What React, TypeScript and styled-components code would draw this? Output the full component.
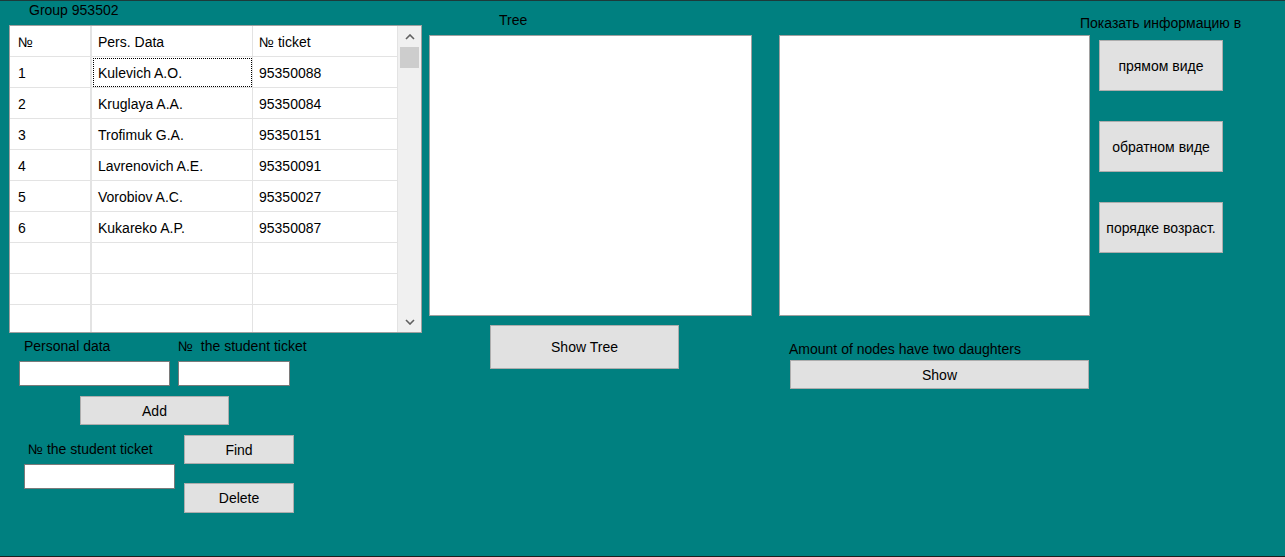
import React from "react";
import styled, { createGlobalStyle } from "styled-components";

const Global = createGlobalStyle`
  html, body { margin: 0; padding: 0; background: #008080; }
  body { font-family: "Liberation Sans", Arial, sans-serif; font-size: 14px; color: #000; }
  * { box-sizing: border-box; }
`;

const Form = styled.div`
  width: 1285px;
  height: 557px;
  background: #008080;
  border-top: 1px solid #1d3a3a;
  border-bottom: 1px solid #1e1e1e;
  display: flex;
  align-items: flex-start;
  padding-left: 9px;
  overflow: hidden;
`;

const Column = styled.div<{ $ml?: number; $w?: number }>`
  display: flex;
  flex-direction: column;
  align-items: flex-start;
  margin-left: ${(p) => p.$ml ?? 0}px;
  ${(p) => (p.$w ? `width: ${p.$w}px;` : "")}
  flex-shrink: 0;
`;

const Caption = styled.div<{ $ml?: number; $mt?: number }>`
  margin-left: ${(p) => p.$ml ?? 0}px;
  margin-top: ${(p) => p.$mt ?? 0}px;
  line-height: 16px;
  height: 16px;
  white-space: pre;
`;

const Grid = styled.div`
  margin-top: 7px;
  width: 413px;
  height: 308px;
  border: 1px solid #a0a0a0;
  background: #fff;
  display: flex;
  overflow: hidden;
`;

const GridBody = styled.div`
  width: 388px;
  display: flex;
  flex-direction: column;
`;

const GridRow = styled.div`
  display: grid;
  grid-template-columns: 82px 161px 145px;
  height: 31px;
  flex-shrink: 0;
`;

const Cell = styled.div<{ $focus?: boolean }>`
  border-right: 1px solid #e3e3e3;
  border-bottom: 1px solid #e3e3e3;
  padding: 2px 0 0 6px;
  display: flex;
  align-items: center;
  white-space: nowrap;
  &:first-child { padding-left: 8px; border-right-width: 2px; }
  ${(p) => (p.$focus ? "outline: 1px dotted #000; outline-offset: -2px;" : "")}
`;

const ScrollBar = styled.div`
  width: 23px;
  background: #f0f0f0;
  display: flex;
  flex-direction: column;
  align-items: center;
`;

const ArrowBox = styled.div`
  width: 23px;
  height: 21px;
  display: flex;
  align-items: center;
  justify-content: center;
`;

const Thumb = styled.div`
  width: 19px;
  height: 21px;
  background: #cdcdcd;
`;

const Spacer = styled.div`
  flex: 1;
`;

const Row = styled.div<{ $ml?: number; $mt?: number; $gap?: number }>`
  display: flex;
  align-items: flex-start;
  margin-left: ${(p) => p.$ml ?? 0}px;
  margin-top: ${(p) => p.$mt ?? 0}px;
  gap: ${(p) => p.$gap ?? 0}px;
`;

const Field = styled.div<{ $w: number }>`
  width: ${(p) => p.$w}px;
  display: flex;
  flex-direction: column;
`;

const Input = styled.input<{ $mt?: number }>`
  margin-top: ${(p) => p.$mt ?? 7}px;
  width: 100%;
  height: 25px;
  border: 1px solid #7a7a7a;
  background: #fff;
  padding: 2px 4px;
  font: inherit;
  outline: none;
`;

const Button = styled.button<{ $w: number; $h: number; $ml?: number; $mt?: number }>`
  width: ${(p) => p.$w}px;
  height: ${(p) => p.$h}px;
  margin-left: ${(p) => p.$ml ?? 0}px;
  margin-top: ${(p) => p.$mt ?? 0}px;
  background: #e1e1e1;
  border: 1px solid #adadad;
  font-family: "Liberation Sans", Arial, sans-serif;
  font-size: 14px;
  color: #000;
  padding: 0;
  flex-shrink: 0;
  white-space: nowrap;
`;

const Panel = styled.div<{ $w: number; $mt?: number }>`
  width: ${(p) => p.$w}px;
  height: 281px;
  margin-top: ${(p) => p.$mt ?? 0}px;
  background: #fff;
  border: 1px solid #a0a0a0;
`;

const ButtonStack = styled.div`
  display: flex;
  flex-direction: column;
  gap: 30px;
  margin-top: 9px;
`;

const Chevron = ({ down }: { down?: boolean }) => (
  <svg width="10" height="6" viewBox="0 0 10 6">
    <polyline
      points={down ? "1,1 5,5 9,1" : "1,5 5,1 9,5"}
      fill="none"
      stroke="#606060"
      strokeWidth="1.6"
    />
  </svg>
);

const students = [
  ["1", "Kulevich A.O.", "95350088"],
  ["2", "Kruglaya A.A.", "95350084"],
  ["3", "Trofimuk G.A.", "95350151"],
  ["4", "Lavrenovich A.E.", "95350091"],
  ["5", "Vorobiov A.C.", "95350027"],
  ["6", "Kukareko A.P.", "95350087"],
  ["", "", ""],
  ["", "", ""],
  ["", "", ""],
];

export default function App() {
  return (
    <>
      <Global />
      <Form>
        <Column $w={413}>
          <Caption $ml={20} $mt={1}>Group 953502</Caption>
          <Grid>
            <GridBody>
              <GridRow>
                <Cell>№</Cell>
                <Cell>Pers. Data</Cell>
                <Cell>№ ticket</Cell>
              </GridRow>
              {students.map((s, i) => (
                <GridRow key={i}>
                  <Cell>{s[0]}</Cell>
                  <Cell $focus={i === 0}>{s[1]}</Cell>
                  <Cell>{s[2]}</Cell>
                </GridRow>
              ))}
            </GridBody>
            <ScrollBar>
              <ArrowBox>
                <Chevron />
              </ArrowBox>
              <Thumb />
              <Spacer />
              <ArrowBox>
                <Chevron down />
              </ArrowBox>
            </ScrollBar>
          </Grid>
          <Row $ml={10} $mt={5} $gap={8}>
            <Field $w={151}>
              <Caption $ml={5}>Personal data</Caption>
              <Input />
            </Field>
            <Field $w={112}>
              <Caption>{"№  the student ticket"}</Caption>
              <Input />
            </Field>
          </Row>
          <Button $w={149} $h={29} $ml={71} $mt={10}>Add</Button>
          <Row $ml={15} $mt={10} $gap={9}>
            <Field $w={151}>
              <Caption $ml={4} $mt={6}>№ the student ticket</Caption>
              <Input />
            </Field>
            <Field $w={110}>
              <Button $w={110} $h={29}>Find</Button>
              <Button $w={110} $h={30} $mt={19}>Delete</Button>
            </Field>
          </Row>
        </Column>

        <Column $ml={7}>
          <Caption $ml={70} $mt={11}>Tree</Caption>
          <Panel $w={323} $mt={7} />
          <Button $w={189} $h={44} $ml={61} $mt={9}>Show Tree</Button>
        </Column>

        <Column $ml={27}>
          <Panel $w={311} $mt={34} />
          <Caption $ml={10} $mt={25}>Amount of nodes have two daughters</Caption>
          <Button $w={299} $h={29} $ml={11} $mt={3}>Show</Button>
        </Column>

        <Column $ml={9}>
          <Caption $ml={-19} $mt={14}>Показать информацию в</Caption>
          <ButtonStack>
            <Button $w={124} $h={51}>прямом виде</Button>
            <Button $w={124} $h={51}>обратном виде</Button>
            <Button $w={124} $h={51}>порядке возраст.</Button>
          </ButtonStack>
        </Column>
      </Form>
    </>
  );
}
